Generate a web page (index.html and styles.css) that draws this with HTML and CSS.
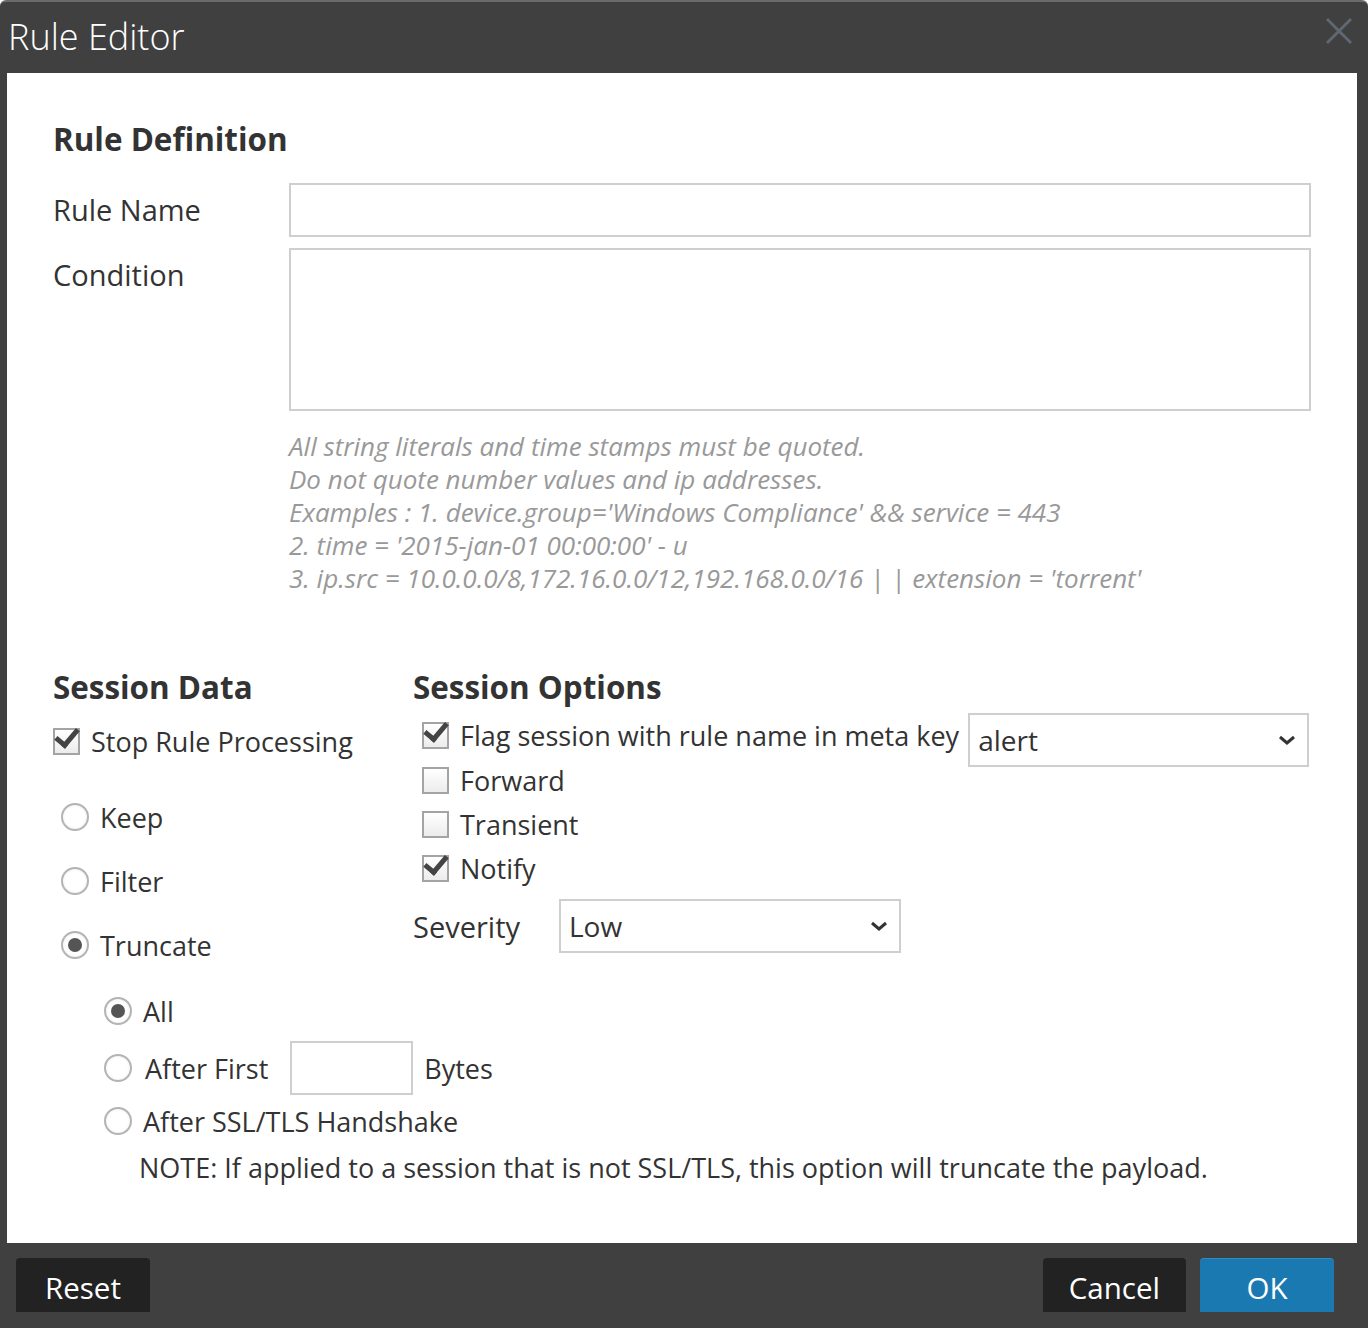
FILE: index.html
```html
<!DOCTYPE html>
<html lang="en">
<head>
  <meta charset="UTF-8" />
  <title>Rule Editor</title>
  <link rel="stylesheet" href="styles.css">
</head>
<body>
  <div class="dialog">
    <div class="titlebar">
      <span class="title">Rule Editor</span>
      <svg class="close" width="30" height="30" viewBox="0 0 30 30"><path d="M3 3L27 27M27 3L3 27" stroke="#5f6770" stroke-width="3" fill="none"/></svg>
    </div>

    <div class="content">
      <h2 class="heading">Rule Definition</h2>

      <div class="field-row">
        <label class="field-label">Rule Name</label>
        <input class="text-input" type="text">
      </div>
      <div class="field-row">
        <label class="field-label">Condition</label>
        <textarea class="text-area"></textarea>
      </div>

      <div class="hint">
        All string literals and time stamps must be quoted.<br>
        Do not quote number values and ip addresses.<br>
        Examples : 1. device.group='Windows Compliance' &amp;&amp; service = 443<br>
        2. time = '2015-jan-01 00:00:00' - u<br>
        3. ip.src = 10.0.0.0/8,172.16.0.0/12,192.168.0.0/16 | | extension = 'torrent'
      </div>

      <div class="sessions">
        <div class="session-data">
          <h2 class="heading sub">Session Data</h2>
          <div class="check-row stop">
            <span class="check on"></span>
            <span>Stop Rule Processing</span>
          </div>
          <div class="radio-list">
            <div class="radio-row"><span class="radio"></span><span>Keep</span></div>
            <div class="radio-row"><span class="radio"></span><span>Filter</span></div>
            <div class="radio-row"><span class="radio on"></span><span>Truncate</span></div>
          </div>
        </div>

        <div class="session-options">
          <h2 class="heading sub">Session Options</h2>
          <div class="check-row flag">
            <span class="check on"></span>
            <span class="flag-text">Flag session with rule name in meta key</span>
            <div class="select meta">
              <span>alert</span>
              <svg width="20" height="12" viewBox="0 0 20 12"><path d="M3 3L10 9L17 3" stroke="#333" stroke-width="3" fill="none"/></svg>
            </div>
          </div>
          <div class="check-row"><span class="check"></span><span>Forward</span></div>
          <div class="check-row"><span class="check"></span><span>Transient</span></div>
          <div class="check-row"><span class="check on"></span><span>Notify</span></div>
          <div class="severity-row">
            <span class="severity-label">Severity</span>
            <div class="select severity">
              <span>Low</span>
              <svg width="20" height="12" viewBox="0 0 20 12"><path d="M3 3L10 9L17 3" stroke="#333" stroke-width="3" fill="none"/></svg>
            </div>
          </div>
        </div>
      </div>

      <div class="truncate-options">
        <div class="radio-row small"><span class="radio on"></span><span>All</span></div>
        <div class="radio-row small first">
          <span class="radio"></span><span class="after-first">After First</span>
          <input class="bytes-input" type="text">
          <span>Bytes</span>
        </div>
        <div class="radio-row small"><span class="radio"></span><span>After SSL/TLS Handshake</span></div>
        <div class="note">NOTE: If applied to a session that is not SSL/TLS, this option will truncate the payload.</div>
      </div>
    </div>

    <div class="footer">
      <button class="btn">Reset</button>
      <div class="spacer"></div>
      <button class="btn">Cancel</button>
      <button class="btn primary">OK</button>
    </div>
  </div>
</body>
</html>
```

FILE: styles.css
```css
:root {
  --frame: #404040;
  --text: #333;
  --hint: #999;
  --border: #cfcfcf;
  --blue: #1b79b1;
}

body {
  margin: 0;
  font-family: "Open Sans", Arial, sans-serif;
  color: var(--text);
  background: #fff;
}

.dialog {
  width: 1368px;
  height: 1328px;
  background: var(--frame);
  border-radius: 6px 6px 0 0;
  border-top: 2px solid #6a6a6a;
  box-sizing: border-box;
  display: flex;
  flex-direction: column;
}

.titlebar {
  height: 71px;
  display: flex;
  align-items: center;
  justify-content: space-between;
  padding: 0 14px 0 8px;
}

.title {
  color: #fff;
  font-size: 36px;
  font-weight: 300;
  margin-top: -3px;
}

.close {
  margin-top: -14px;
}

.content {
  background: #fff;
  margin: 0 11px 0 7px;
  padding: 44px 46px 0 46px;
  height: 1170px;
  box-sizing: border-box;
  font-size: 27px;
}

.heading {
  margin: 0;
  font-size: 31.4px;
  font-weight: 700;
  line-height: 44px;
}

.field-row {
  display: flex;
  align-items: flex-start;
  margin-top: 22px;
}

.field-row + .field-row {
  margin-top: 11px;
}

.field-label {
  width: 236px;
  flex-shrink: 0;
  font-size: 29px;
  line-height: 54px;
}

.text-input,
.text-area {
  flex: 1;
  border: 2px solid var(--border);
  box-sizing: border-box;
  font: inherit;
  margin: 0;
}

.text-input {
  height: 54px;
}

.text-area {
  height: 163px;
  resize: none;
}

.hint {
  margin: 19px 0 0 236px;
  color: var(--hint);
  font-style: italic;
  font-size: 26px;
  line-height: 33px;
}

.sessions {
  display: flex;
  margin-top: 70px;
}

.session-data {
  width: 360px;
  flex-shrink: 0;
}

.session-options {
  flex: 1;
  min-width: 0;
}

.check-row {
  display: flex;
  align-items: center;
  height: 44px;
  gap: 11px;
  padding-left: 9px;
  white-space: nowrap;
}

.check-row.stop {
  padding-left: 0;
  margin-top: 10px;
}

.check-row.flag {
  margin-top: 5px;
  align-items: flex-start;
}

.check-row.flag > span {
  margin-top: 9px;
  line-height: 26px;
}

.check-row.flag .check {
  margin-top: 8px;
}

.flag-text {
  flex-shrink: 0;
}

.check {
  width: 27px;
  height: 27px;
  box-sizing: border-box;
  border: 2px solid #a4a4a4;
  background: linear-gradient(#fff, #ececec);
  flex-shrink: 0;
  position: relative;
}

.check.on::after {
  content: "";
  position: absolute;
  left: 5px;
  top: -6px;
  width: 9px;
  height: 18px;
  border-right: 5px solid #444;
  border-bottom: 5px solid #444;
  transform: rotate(40deg);
}

.select {
  display: flex;
  align-items: center;
  justify-content: space-between;
  border: 2px solid var(--border);
  box-sizing: border-box;
  height: 54px;
  padding: 0 10px 0 8px;
  font-size: 28px;
  background: #fff;
}

.select.meta {
  width: 341px;
  flex-shrink: 0;
  margin-left: -2px;
  margin-top: -1px;
}

.severity-row {
  display: flex;
  align-items: center;
  height: 54px;
  margin-top: 9px;
}

.severity-label {
  width: 146px;
  font-size: 29px;
}

.select.severity {
  width: 342px;
}

.radio-list {
  margin-top: 22px;
}

.radio-row {
  display: flex;
  align-items: center;
  height: 64px;
  gap: 11px;
  padding-left: 8px;
}

.radio {
  width: 28px;
  height: 28px;
  box-sizing: border-box;
  border-radius: 50%;
  border: 2px solid #b4b4b4;
  background: radial-gradient(#fff 55%, #e6e6e6);
  flex-shrink: 0;
  position: relative;
}

.radio.on::after {
  content: "";
  position: absolute;
  left: 5px;
  top: 5px;
  width: 14px;
  height: 14px;
  border-radius: 50%;
  background: #555;
}

.truncate-options {
  margin-top: 12px;
  padding-left: 43px;
}

.radio-row.small {
  height: 44px;
}

.radio-row.first {
  height: 54px;
  margin: 8px 0 4px;
}

.after-first {
  margin-left: 2px;
}

.bytes-input {
  width: 123px;
  height: 54px;
  border: 2px solid var(--border);
  box-sizing: border-box;
  margin: 0 0 0 11px;
}

.note {
  margin: 3px 0 0 43px;
  line-height: 44px;
}

.footer {
  display: flex;
  align-items: flex-start;
  padding: 15px 34px 0 16px;
  gap: 14px;
  flex: 1;
}

.spacer {
  flex: 1;
}

.btn {
  height: 54px;
  min-width: 134px;
  padding: 0 26px;
  border: none;
  border-radius: 4px 4px 0 0;
  background: #222;
  color: #fff;
  font-family: "Open Sans", Arial, sans-serif;
  font-size: 29.5px;
  padding-top: 4px;
}

.btn.primary {
  background: var(--blue);
  border-top: 1px solid #2a8cc8;
}
```
